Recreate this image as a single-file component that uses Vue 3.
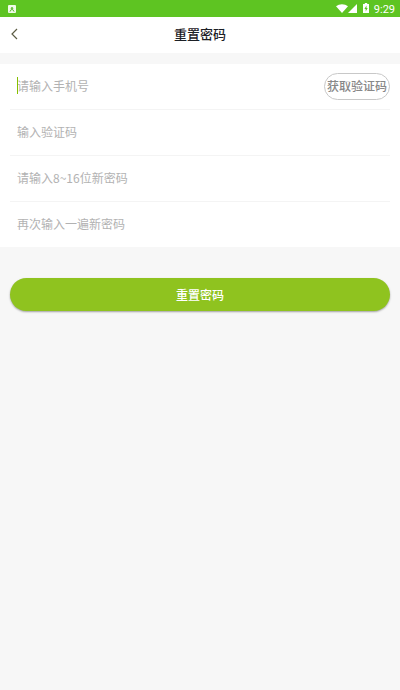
<script setup>
import { reactive } from 'vue'

const form = reactive({ phone: '', code: '', password: '', confirm: '' })
</script>

<template>
  <div class="page">
    <div class="status">
      <svg class="app-icon" width="8" height="8" viewBox="0 0 8 8" aria-hidden="true">
        <rect width="8" height="8" rx="1" fill="#f0fbe8" />
        <path d="M2 6.6L3.2 4.6h1.6L6 6.6" fill="none" stroke="#5cb32b" stroke-width="1" />
        <circle cx="4" cy="3.2" r="1.2" fill="#6fbe45" />
      </svg>
      <div class="indicators">
        <svg class="wifi" width="12" height="9" viewBox="0 0 12 9" aria-hidden="true">
          <path d="M0 2.3C3.4-.6 8.6-.6 12 2.3L6 9z" fill="#fff" />
        </svg>
        <svg class="signal" width="9" height="9" viewBox="0 0 9 9" aria-hidden="true">
          <path d="M9 0v9H0z" fill="#fff" />
        </svg>
        <svg class="battery" width="6" height="10" viewBox="0 0 6 10" aria-hidden="true">
          <path d="M0 1h1.8V0h2.4v1H6v9H0z" fill="#fff" />
          <path d="M3.5 2.4L1.4 6h1.3v2.6L4.7 5H3.5z" fill="#5ec422" />
        </svg>
      </div>
      <span class="time">9:29</span>
    </div>

    <header class="header">
      <button class="back" type="button" aria-label="返回">
        <svg width="7" height="12" viewBox="0 0 7 12" aria-hidden="true">
          <path d="M6 1L1 6l5 5" fill="none" stroke="#5c5c44" stroke-width="1.2" />
        </svg>
      </button>
      <h1 class="title">重置密码</h1>
    </header>

    <form class="form" @submit.prevent>
      <div class="fields">
        <div class="row">
          <div class="entry">
            <input v-model="form.phone" class="field" type="tel" placeholder="请输入手机号" aria-label="请输入手机号" />
            <span class="caret"></span>
          </div>
          <button class="get-code" type="button">获取验证码</button>
        </div>
        <div class="row">
          <input v-model="form.code" class="field" type="text" placeholder="输入验证码" aria-label="输入验证码" />
        </div>
        <div class="row">
          <input v-model="form.password" class="field" type="password" placeholder="请输入8~16位新密码" aria-label="请输入8~16位新密码" />
        </div>
        <div class="row">
          <input v-model="form.confirm" class="field" type="password" placeholder="再次输入一遍新密码" aria-label="再次输入一遍新密码" />
        </div>
      </div>
      <button class="submit" type="submit">重置密码</button>
    </form>
  </div>
</template>

<style>
body {
  background: #f7f7f7;
}
</style>

<style scoped>
.page {
  min-height: 100vh;
  background: #f7f7f7;
  font-family: "Noto Sans CJK SC", sans-serif;
  font-size: 12px;
}

button,
input {
  margin: 0;
  padding: 0;
  border: 0;
  background: none;
  font: inherit;
}

.status {
  display: flex;
  align-items: center;
  height: 17px;
  padding: 0 5px 0 8px;
  background: #5ec422;
}

.indicators {
  display: flex;
  align-items: flex-end;
  align-self: flex-start;
  margin-left: auto;
  padding-top: 3px;
}

.battery {
  margin-left: 6px;
}

.time {
  margin-left: 5px;
  padding-top: 2px;
  color: #fff;
  font: 400 11px/17px Roboto, sans-serif;
}

.header {
  display: grid;
  grid-template-columns: 32px 1fr 32px;
  align-items: center;
  height: 34px;
  padding-bottom: 2px;
  background: #fff;
}

.back {
  display: flex;
  align-items: center;
  height: 34px;
  padding-left: 11px;
}

.title {
  margin: 0;
  color: #1c2026;
  font-size: 13px;
  font-weight: 500;
  line-height: 34px;
  text-align: center;
}

.form {
  padding-top: 11px;
}

.fields {
  padding: 0 10px;
  background: #fff;
}

.row {
  display: flex;
  align-items: center;
  height: 45px;
  padding-left: 7px;
}

.row + .row {
  border-top: 1px solid #f4f4f4;
}

.entry {
  position: relative;
  display: flex;
  flex: 1;
  min-width: 0;
}

.field {
  flex: 1;
  min-width: 0;
  height: 18px;
  padding-bottom: 2px;
  color: #333;
  outline: none;
}

.field::placeholder {
  color: #b2b2b2;
  opacity: 1;
}

.caret {
  position: absolute;
  top: 0;
  left: 0;
  width: 1px;
  height: 17px;
  background: #86c000;
}

.get-code {
  height: 27px;
  padding: 0 2px 2px;
  border: 1px solid #c8c8c8;
  border-radius: 14px;
  color: #888;
  font-weight: 500;
}

.submit {
  display: block;
  width: calc(100% - 20px);
  height: 33px;
  margin: 31px 10px 0;
  border-radius: 17px;
  background: #8fc31f;
  box-shadow: 0 1px 2px rgba(0, 0, 0, 0.35);
  color: #fff;
  font-weight: 500;
}
</style>
